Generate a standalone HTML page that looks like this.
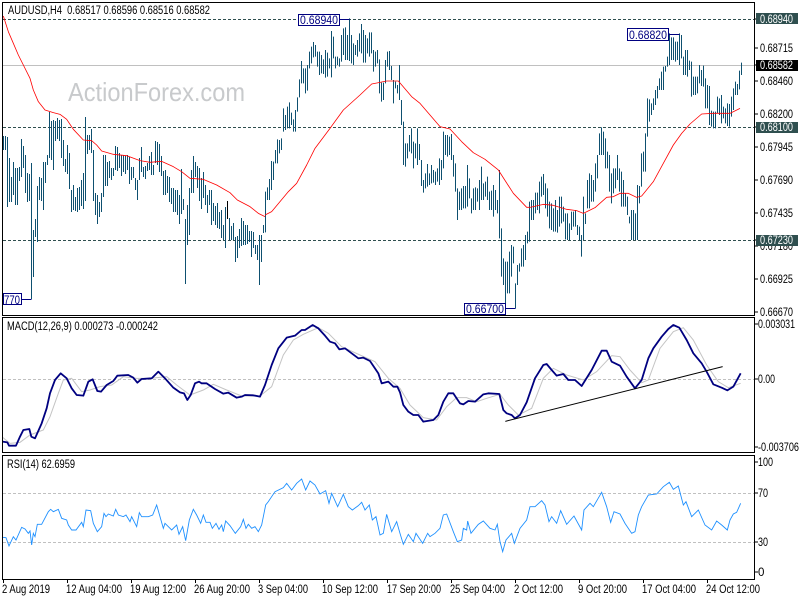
<!DOCTYPE html>
<html><head><meta charset="utf-8"><title>AUDUSD H4</title>
<style>html,body{margin:0;padding:0;background:#fff}svg{display:block}text{font-family:"Liberation Sans",Arial,sans-serif;font-size:11.5px;fill:#000}</style></head>
<body>
<svg width="800" height="600" viewBox="0 0 800 600" xmlns="http://www.w3.org/2000/svg">
<rect width="800" height="600" fill="#fff"/>
<text x="68" y="101" style="font-size:26px;fill:#c8cacc" textLength="177" lengthAdjust="spacingAndGlyphs">ActionForex.com</text>
<g stroke-width="1" fill="none" shape-rendering="crispEdges">
<path d="M3 65.5H754" stroke="#c0c0c0"/>
<path d="M3 19.5H754M3 127.5H754M3 240.5H754" stroke="#2f4f4f" stroke-dasharray="3 2"/>
<path d="M3 379.5H754M3 493.5H754M3 542.5H754" stroke="#c0c0c0" stroke-dasharray="3 2"/>
</g>
<g fill="none" stroke="#0e5070" stroke-width="1" shape-rendering="crispEdges">
<path d="M3.5 136V150M5.5 136V150M7.5 137V207M9.5 158V202M11.5 177V202M13.5 162V195M15.5 168V205M17.5 168V205M19.5 167V181M21.5 139V177M23.5 146V168M25.5 155V193M27.5 173V202M29.5 174V201M31.5 163V299M33.5 230V277M35.5 219V237M37.5 186V242M39.5 177V200M41.5 178V201M43.5 162V210M45.5 162V183M47.5 155V165M49.5 112V158M51.5 121V160M53.5 120V170M55.5 121V141M57.5 118V139M59.5 120V141M61.5 119V158M63.5 140V166M65.5 159V172M67.5 145V174M69.5 153V189M71.5 190V212M73.5 185V210M75.5 197V211M77.5 188V212M79.5 187V210M81.5 180V206M83.5 173V209M85.5 117V201M87.5 135V154M89.5 135V150M91.5 129V153M93.5 150V201M95.5 193V215M97.5 195V224M99.5 202V217M101.5 193V212M103.5 155V197M105.5 155V186M107.5 162V186M109.5 161V178M111.5 168V180M113.5 168V176M115.5 146V170M117.5 147V171M119.5 153V168M121.5 155V176M123.5 155V172M125.5 156V174M127.5 155V170M129.5 157V184M131.5 167V180M133.5 167V178M135.5 178V190M137.5 180V200M139.5 158V180M141.5 147V172M143.5 167V177M145.5 166V179M147.5 163V171M149.5 156V170M151.5 152V175M153.5 165V175M155.5 141V163M157.5 142V165M159.5 144V172M161.5 156V176M163.5 171V195M165.5 170V195M167.5 176V193M169.5 177V202M171.5 188V204M173.5 188V212M175.5 190V212M177.5 190V215M179.5 195V224M181.5 169V214M183.5 199V210M185.5 219V284M187.5 205V245M189.5 188V235M191.5 170V193M193.5 156V193M195.5 162V177M197.5 166V188M199.5 168V201M201.5 178V209M203.5 172V198M205.5 185V205M207.5 195V213M209.5 190V205M211.5 190V225M213.5 203V221M215.5 206V225M217.5 203V228M219.5 212V229M221.5 210V238M223.5 225V240M225.5 207V248M229.5 218V240M231.5 226V240M233.5 223V240M235.5 237V262M237.5 236V258M239.5 229V248M241.5 218V246M243.5 221V245M245.5 225V245M247.5 225V244M249.5 231V242M251.5 231V257M253.5 232V248M255.5 245V254M257.5 245V260M259.5 235V285M261.5 235V262M263.5 225V233"/>
<g transform="scale(1,.33333)">
<path d="M265.5 575V697M267.5 562V600M269.5 537V600M271.5 483V570M273.5 485V540M275.5 450V490M277.5 418V490M279.5 420V460M281.5 415V450M283.5 325V395M285.5 345V390M287.5 320V385M289.5 307V385M291.5 338V375M293.5 358V395M295.5 330V395M297.5 292V335M299.5 238V292M301.5 183V250M303.5 205V250M305.5 205V280M307.5 195V272M309.5 155V205M311.5 140V190M313.5 126V172M315.5 135V170M317.5 155V200M319.5 155V225M321.5 165V220M323.5 178V222M325.5 150V233M327.5 158V230M329.5 175V205M331.5 93V232M333.5 110V175M335.5 170V205M337.5 170V195M339.5 175V200M341.5 105V185M343.5 85V165M345.5 82V180M347.5 105V180M349.5 55V183M351.5 105V190M353.5 130V195M355.5 135V165M357.5 120V170M359.5 100V155M361.5 72V160M363.5 90V188M365.5 105V188M367.5 115V160M369.5 97V170M371.5 97V160M373.5 150V215M375.5 155V200M377.5 150V190M379.5 178V280M381.5 248V305M383.5 248V300M385.5 180V250M387.5 155V200M389.5 153V210M391.5 198V240M393.5 240V310M395.5 245V265M397.5 255V280M399.5 195V300M401.5 300V375M403.5 365V495M405.5 430V500M407.5 430V475M409.5 405V455M411.5 385V460M413.5 425V505M415.5 430V475M417.5 385V495M419.5 432V480M421.5 480V558M423.5 540V578M425.5 520V565M427.5 492V560M429.5 520V555M431.5 495V550M433.5 510V548M435.5 515V555M437.5 505V545M439.5 475V555M441.5 480V540M443.5 395V505M445.5 405V465M447.5 405V470M449.5 410V465M451.5 402V480M453.5 465V530M455.5 490V575M457.5 565V660M459.5 575V630M461.5 565V630M463.5 558V625M465.5 558V625M467.5 495V620M469.5 535V595M471.5 595V640M473.5 565V630M475.5 562V630M477.5 565V605M479.5 540V630M481.5 500V600M483.5 550V600M485.5 545V590M487.5 530V600M489.5 575V630M491.5 572V630M493.5 555V650M495.5 570V630M497.5 600V640M499.5 510V715M501.5 685V830M503.5 775V855M505.5 785V925M507.5 785V880M509.5 755V880M511.5 735V830M513.5 740V790M515.5 850V925M517.5 795V855M519.5 790V815M521.5 745V800M523.5 735V800M525.5 705V780M527.5 695V730M529.5 605V725"/>
<path d="M531.5 600V660M533.5 600V660M535.5 578V640M537.5 578V630M539.5 545V640M541.5 530V590M543.5 522V585M545.5 550V625M547.5 565V650M549.5 605V685M551.5 610V690M553.5 625V695M555.5 600V695M557.5 630V698M559.5 590V680M561.5 590V670M563.5 620V665M565.5 640V718M567.5 640V720M569.5 670V720M571.5 635V690M573.5 635V680M575.5 630V680M577.5 675V705M579.5 680V720M581.5 705V770M583.5 590V720M585.5 640V672M587.5 540V625M589.5 520V625M591.5 525V605M593.5 540V605M595.5 490V575M597.5 465V535M599.5 400V465M601.5 382V465M603.5 395V465M605.5 415V505M607.5 455V505M609.5 465V575M611.5 520V610M613.5 505V580M615.5 505V565M617.5 465V540M619.5 505V575M621.5 515V620M623.5 540V620M625.5 580V620M627.5 590V645M629.5 650V670M631.5 630V720M633.5 630V720M635.5 640V720M637.5 555V720M639.5 558V610M641.5 460V560M643.5 455V515M645.5 400V515M647.5 295V410M649.5 298V365M651.5 310V345M653.5 295V330M655.5 270V315M657.5 258V295M659.5 235V270M661.5 215V270M663.5 200V270M665.5 198V215M667.5 170V200M669.5 100V195M671.5 112V180M673.5 112V180M675.5 125V185M677.5 125V180M679.5 100V195M681.5 105V175M683.5 170V225M685.5 150V225M687.5 150V230M689.5 182V210M691.5 185V290M693.5 230V285M695.5 230V285M697.5 230V280M699.5 195V250M701.5 210V258M703.5 197V260M705.5 235V325M707.5 255V325M709.5 258V375M711.5 332V380M713.5 335V385M715.5 335V385M717.5 290V340M719.5 295V345M721.5 285V370M723.5 320V355M725.5 325V370M727.5 310V378M729.5 312V380M731.5 290V350M733.5 265V330M735.5 245V285M737.5 252V285M739.5 212V268M741.5 188V225"/>
</g>
<path d="M227.5 201V219" stroke="#000"/>
</g>
<g fill="none" stroke="#f00" stroke-width="2.4" stroke-linejoin="round">
<path transform="scale(.33333)" d="M10 48L25 95L40 130L55 165L70 195L90 235L100 270L115 305L135 330L160 338L180 343L200 358L220 388L250 420L275 422L290 435L305 453L340 463L380 467L420 482L450 487L485 484L520 500L545 515L570 535L610 538L650 555L690 578L712 600L750 620L775 640L795 650"/>
<path transform="translate(265,0) scale(.33333)" d="M0 645L20 635L45 605L70 575L95 550L125 495L150 445L195 385L235 330L285 285L320 252L345 247L365 243L400 243L440 290L465 310L495 345L525 380L555 387L590 425L625 458L660 478L700 510L745 580L785 622L795 622"/>
<path transform="translate(530,0) scale(.33333)" d="M0 622L40 613L70 616L110 628L140 632L160 640L195 623L230 592L250 590L270 580L295 580L320 592L335 588L370 545L400 490L430 435L455 400L480 372L515 342L550 340L600 340L630 325"/>
</g>
<g fill="none" transform="translate(0,315) scale(.33333)">
<path stroke="#c4c4c4" stroke-width="3" d="M8 367L30 385L60 382L90 360L130 345L150 305L175 235L190 195L215 190L245 230L270 225L300 215L335 210L370 185L410 190L450 190L500 185L530 210L570 240L610 225L640 208L680 225L725 243L780 243L815 215L850 120L880 75L910 58L955 38L985 55L1025 95L1080 120L1125 140L1165 190L1200 220L1230 270L1270 308L1310 315L1340 275L1370 248L1400 248L1430 260L1460 250L1500 238L1525 270L1555 300L1595 280L1630 190L1660 160L1700 180L1750 195L1790 170L1835 122L1860 125L1890 165L1925 203L1945 195L1980 100L2020 50L2050 38L2080 75L2120 150L2155 200L2185 218L2222 205"/>
<path stroke="#000080" stroke-width="5.4" stroke-linejoin="round" d="M8 380L22 382L27 392L48 392L60 365L70 345L88 342L94 365L105 370L125 325L140 280L150 235L165 195L182 175L200 190L215 220L230 240L250 242L265 200L278 193L292 228L303 230L320 210L340 198L352 182L385 180L400 188L412 203L425 192L455 190L475 170L495 190L520 218L540 232L552 235L562 255L572 240L585 205L597 200L605 205L620 205L645 222L670 236L685 233L710 248L725 245L735 240L760 241L780 245L795 210L815 150L835 100L860 68L885 62L905 45L915 45L938 30L955 40L975 62L990 80L1005 85L1018 103L1035 100L1075 130L1090 128L1110 138L1135 175L1145 205L1165 200L1180 215L1192 215L1200 232L1210 270L1225 290L1240 300L1255 300L1270 320L1300 315L1315 300L1330 260L1345 235L1360 235L1380 265L1390 268L1405 258L1425 260L1450 238L1465 235L1498 237L1510 285L1520 295L1535 300L1545 310L1560 300L1580 262L1605 190L1630 150L1640 147L1655 165L1670 182L1690 177L1705 195L1725 195L1745 213L1775 165L1805 107L1820 107L1835 140L1860 152L1880 185L1905 220L1925 195L1945 130L1960 100L1985 65L2005 42L2020 30L2038 38L2060 75L2080 115L2105 145L2120 170L2140 208L2165 218L2182 226L2200 215L2222 175"/>
<path stroke="#000" stroke-width="3" d="M1516 319L2168 155"/>
<path stroke="#1e90ff" stroke-width="2.7" d="M8 667L18 668L27 693L40 665L48 675L65 637L75 642L85 655L90 648L95 690L100 655L105 665L112 628L125 628L145 590L152 583L160 590L175 583L185 610L200 615L205 630L215 645L228 645L245 622L250 635L258 585L272 587L280 625L292 650L305 635L312 595L318 605L325 597L340 603L347 583L355 600L370 605L378 600L390 620L395 605L410 635L418 593L425 605L445 605L458 600L470 570L480 605L490 640L495 625L515 645L530 630L537 658L548 635L557 677L568 615L580 583L590 600L602 625L610 600L618 622L630 622L637 640L648 625L657 643L665 630L670 650L677 618L690 632L706 655L722 635L730 613L738 640L745 628L755 640L765 635L775 650L785 630L797 570L805 560L825 530L850 518L860 505L875 525L890 505L905 492L917 525L930 498L945 510L960 537L977 527L987 565L995 535L1013 575L1030 538L1045 575L1057 585L1075 572L1085 562L1095 585L1108 570L1117 615L1128 605L1140 660L1150 655L1160 598L1175 650L1190 620L1200 655L1210 688L1225 658L1240 680L1248 655L1268 685L1283 655L1290 665L1305 655L1320 640L1330 600L1340 597L1360 650L1372 680L1385 675L1390 640L1400 645L1403 618L1413 655L1435 628L1450 618L1470 640L1485 645L1492 628L1500 680L1508 710L1518 675L1535 655L1543 685L1560 640L1580 615L1590 575L1605 575L1625 557L1635 570L1647 620L1655 605L1670 625L1682 587L1700 628L1722 603L1745 645L1752 585L1770 565L1780 575L1805 532L1820 575L1832 622L1842 590L1860 597L1875 625L1895 655L1905 650L1915 600L1925 575L1945 540L1970 537L1990 515L2008 502L2020 523L2035 513L2050 570L2058 560L2075 605L2095 585L2115 630L2135 645L2150 618L2165 630L2182 645L2190 615L2200 597L2210 592L2222 565"/>
</g>
<g fill="none" stroke="#000" stroke-width="1" shape-rendering="crispEdges">
<path d="M2.5 2.5H754.5V315.5H2.5ZM2.5 317.5H754.5V452.5H2.5ZM2.5 455.5H754.5V579.5H2.5Z"/>
<path d="M755 19h3M755 48h3M755 65h3M755 81h3M755 114h3M755 127h3M755 147h3M755 180h3M755 213h3M755 240h3M755 246h3M755 279h3M755 312h3M755 324h3M755 379h3M755 447h3M755 462h3M755 493h3M755 542h3M755 572h3M3.5 580v3M67.5 580v3M131.5 580v3M195.5 580v3M259.5 580v3M323.5 580v3M387.5 580v3M451.5 580v3M515.5 580v3M579.5 580v3M643.5 580v3M707.5 580v3"/>
</g>
<g fill="none" stroke="#000080" shape-rendering="crispEdges">
<path d="M21 299.5H31.5M340 19.5H349.5M506 308.5H515.5M669 34.5H679.5"/>
<g fill="#fff"><rect x="3.5" y="293.5" width="18" height="11"/><rect x="298.5" y="14.5" width="41" height="11"/><rect x="464.5" y="303.5" width="41" height="11"/><rect x="627.5" y="28.5" width="41" height="12"/></g>
</g>
<text x="4" y="304" style="fill:#000080;font-size:12px" textLength="16" lengthAdjust="spacingAndGlyphs">770</text>
<text x="300" y="24" style="fill:#000080;font-size:12px" textLength="38" lengthAdjust="spacingAndGlyphs">0.68940</text>
<text x="466" y="313" style="fill:#000080;font-size:12px" textLength="38" lengthAdjust="spacingAndGlyphs">0.66700</text>
<text x="629" y="39" style="fill:#000080;font-size:12px" textLength="38" lengthAdjust="spacingAndGlyphs">0.68820</text>
<text x="8" y="14" textLength="202" lengthAdjust="spacingAndGlyphs">AUDUSD,H4&#160;&#160;0.68517 0.68596 0.68516 0.68582</text>
<text x="7" y="330" textLength="151" lengthAdjust="spacingAndGlyphs">MACD(12,26,9) 0.000273 -0.000242</text>
<text x="7" y="468" textLength="68" lengthAdjust="spacingAndGlyphs">RSI(14) 62.6959</text>
<text x="760" y="52" textLength="33" lengthAdjust="spacingAndGlyphs">0.68715</text>
<text x="760" y="85" textLength="33" lengthAdjust="spacingAndGlyphs">0.68460</text>
<text x="760" y="118" textLength="33" lengthAdjust="spacingAndGlyphs">0.68200</text>
<text x="760" y="151" textLength="33" lengthAdjust="spacingAndGlyphs">0.67945</text>
<text x="760" y="184" textLength="33" lengthAdjust="spacingAndGlyphs">0.67690</text>
<text x="760" y="217" textLength="33" lengthAdjust="spacingAndGlyphs">0.67435</text>
<text x="760" y="250" textLength="33" lengthAdjust="spacingAndGlyphs">0.67180</text>
<text x="760" y="283" textLength="33" lengthAdjust="spacingAndGlyphs">0.66925</text>
<text x="760" y="316" textLength="33" lengthAdjust="spacingAndGlyphs">0.66670</text>
<rect x="756" y="13" width="42" height="11" fill="#2f4f4f"/><text x="760" y="23" style="fill:#fff" textLength="33" lengthAdjust="spacingAndGlyphs">0.68940</text>
<rect x="756" y="122" width="42" height="11" fill="#2f4f4f"/><text x="760" y="131" style="fill:#fff" textLength="33" lengthAdjust="spacingAndGlyphs">0.68100</text>
<rect x="756" y="235" width="42" height="11" fill="#2f4f4f"/><text x="760" y="244" style="fill:#fff" textLength="33" lengthAdjust="spacingAndGlyphs">0.67230</text>
<rect x="756" y="60" width="42" height="11" fill="#000"/><text x="760" y="69" style="fill:#fff" textLength="33" lengthAdjust="spacingAndGlyphs">0.68582</text>
<text x="758" y="328" textLength="37" lengthAdjust="spacingAndGlyphs">0.003031</text>
<text x="758" y="383" textLength="17" lengthAdjust="spacingAndGlyphs">0.00</text>
<text x="758" y="451" textLength="41" lengthAdjust="spacingAndGlyphs">-0.003706</text>
<text x="758" y="466" textLength="15" lengthAdjust="spacingAndGlyphs">100</text>
<text x="758" y="497" textLength="10" lengthAdjust="spacingAndGlyphs">70</text>
<text x="758" y="546" textLength="10" lengthAdjust="spacingAndGlyphs">30</text>
<text x="758" y="576">0</text>
<text x="2" y="593" textLength="48" lengthAdjust="spacingAndGlyphs">2 Aug 2019</text>
<text x="66" y="593" textLength="56" lengthAdjust="spacingAndGlyphs">12 Aug 04:00</text>
<text x="130" y="593" textLength="56" lengthAdjust="spacingAndGlyphs">19 Aug 12:00</text>
<text x="194" y="593" textLength="56" lengthAdjust="spacingAndGlyphs">26 Aug 20:00</text>
<text x="258" y="593" textLength="50" lengthAdjust="spacingAndGlyphs">3 Sep 04:00</text>
<text x="322" y="593" textLength="56" lengthAdjust="spacingAndGlyphs">10 Sep 12:00</text>
<text x="387" y="593" textLength="54" lengthAdjust="spacingAndGlyphs">17 Sep 20:00</text>
<text x="450" y="593" textLength="55" lengthAdjust="spacingAndGlyphs">25 Sep 04:00</text>
<text x="514" y="593" textLength="49" lengthAdjust="spacingAndGlyphs">2 Oct 12:00</text>
<text x="578" y="593" textLength="49" lengthAdjust="spacingAndGlyphs">9 Oct 20:00</text>
<text x="642" y="593" textLength="54" lengthAdjust="spacingAndGlyphs">17 Oct 04:00</text>
<text x="706" y="593" textLength="54" lengthAdjust="spacingAndGlyphs">24 Oct 12:00</text>
</svg>
</body></html>
